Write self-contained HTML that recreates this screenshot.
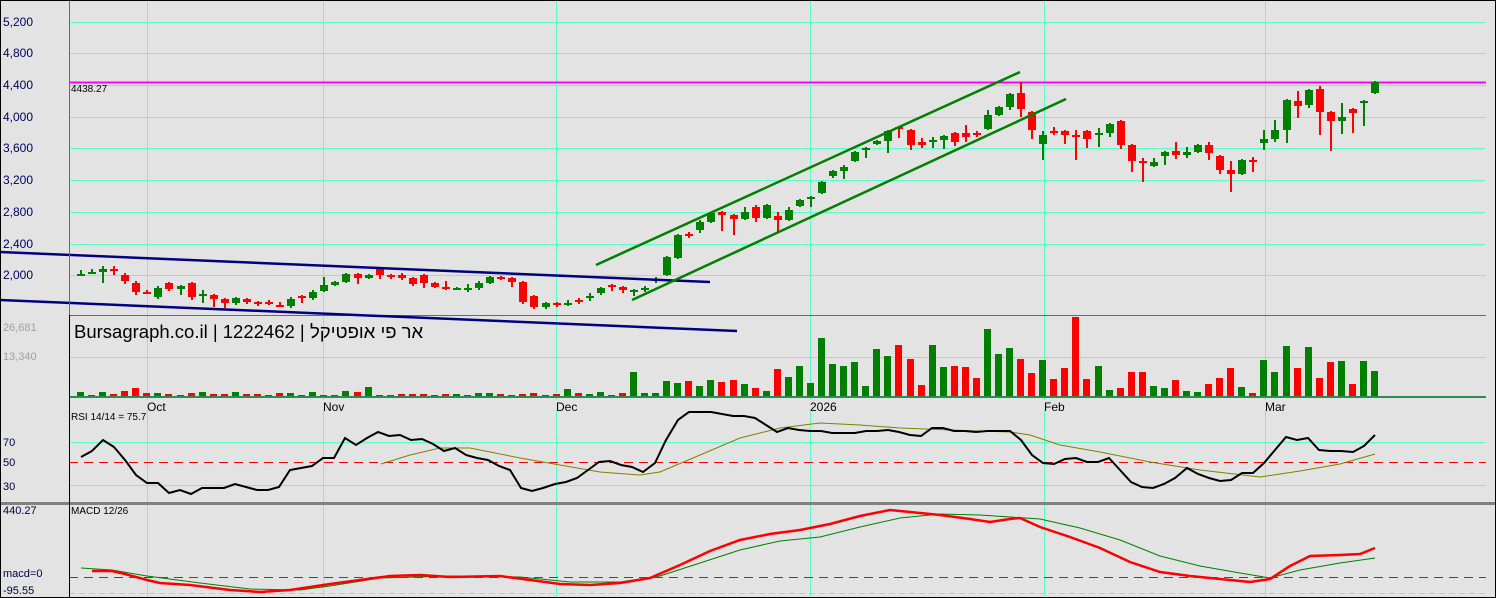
<!DOCTYPE html>
<html><head><meta charset="utf-8"><style>
html,body{margin:0;padding:0;background:#e3e3e3;}
body{width:1496px;height:598px;overflow:hidden;}
svg{display:block;font-family:"Liberation Sans",Arial,sans-serif;}
</style></head><body>
<svg id="s" width="1496" height="598" viewBox="0 0 1496 598" xmlns="http://www.w3.org/2000/svg">
<rect width="1496" height="598" fill="#e3e3e3"/>
<g id="grid" stroke="#5cffc8" stroke-width="1" shape-rendering="crispEdges">
<line x1="69" x2="1486" y1="22.5" y2="22.5"/><line x1="69" x2="1486" y1="53.5" y2="53.5"/><line x1="69" x2="1486" y1="85.5" y2="85.5"/><line x1="69" x2="1486" y1="117.5" y2="117.5"/><line x1="69" x2="1486" y1="148.5" y2="148.5"/><line x1="69" x2="1486" y1="180.5" y2="180.5"/><line x1="69" x2="1486" y1="212.5" y2="212.5"/><line x1="69" x2="1486" y1="244.5" y2="244.5"/><line x1="69" x2="1486" y1="275.5" y2="275.5"/>
<line x1="69" x2="1486" y1="357.5" y2="357.5"/>
<line x1="69" x2="1486" y1="442.5" y2="442.5"/><line x1="69" x2="1486" y1="485.5" y2="485.5"/>
<line x1="69" x2="1486" y1="593.5" y2="593.5" stroke-dasharray="6,4"/>
<line y1="0" y2="598" x1="147.5" x2="147.5"/><line y1="0" y2="598" x1="323.5" x2="323.5"/><line y1="0" y2="598" x1="556.5" x2="556.5"/><line y1="0" y2="598" x1="810.5" x2="810.5"/><line y1="0" y2="598" x1="1044.5" x2="1044.5"/><line y1="0" y2="598" x1="1265.5" x2="1265.5"/>
</g>
<rect x="0" y="400" width="1496" height="10" fill="#e3e3e3"/>
<g font-size="12" fill="#000">
<text x="147" y="411">Oct</text><text x="323" y="411">Nov</text><text x="556" y="411">Dec</text><text x="810" y="411">2026</text><text x="1044" y="411">Feb</text><text x="1265" y="411">Mar</text>
</g>
<g font-size="12" fill="#000060">
<text x="3" y="26">5,200</text><text x="3" y="57">4,800</text><text x="3" y="89">4,400</text><text x="3" y="121">4,000</text><text x="3" y="152">3,600</text><text x="3" y="184">3,200</text><text x="3" y="216">2,800</text><text x="3" y="248">2,400</text><text x="3" y="279">2,000</text>
</g>
<g font-size="11" fill="#a0a0a0"><text x="3" y="331">26,681</text><text x="3" y="360">13,340</text></g>
<g font-size="11" fill="#000040"><text x="3" y="446">70</text><text x="3" y="466">50</text><text x="3" y="490">30</text>
<text x="3" y="514">440.27</text><text x="3" y="577">macd=0</text><text x="3" y="594">-95.55</text></g>
<line x1="69" x2="1486" y1="82.5" y2="82.5" stroke="#ff00ff" stroke-width="2"/>
<text x="71" y="92" font-size="10" fill="#000">4438.27</text>
<line x1="69" x2="1486" y1="315.5" y2="315.5" stroke="#2e8b57" stroke-width="1"/>
<line x1="69" x2="1486" y1="397" y2="397" stroke="#2e8b57" stroke-width="2"/>
<g id="cd"></g><g id="vol"></g>
<polyline points="0,252 710,282" stroke="#000080" stroke-width="2.5" fill="none"/>
<polyline points="0,300 737,331" stroke="#000080" stroke-width="2.5" fill="none"/>
<polyline points="596,265 1020,72" stroke="#008000" stroke-width="2.5" fill="none"/>
<polyline points="632,300 1066,99" stroke="#008000" stroke-width="2.5" fill="none"/>
<text x="74" y="338" font-size="18.5" fill="#000">Bursagraph.co.il | 1222462 |</text>
<text x="310" y="338" font-size="18.5" fill="#000">אר פי אופטיקל</text>
<text x="71" y="420" font-size="10" fill="#000">RSI 14/14 = 75.7</text>
<line x1="69" x2="1486" y1="462.5" y2="462.5" stroke="#ff0000" stroke-dasharray="9,6"/>
<line x1="69" x2="1486" y1="577.5" y2="577.5" stroke="#ff0000" stroke-dasharray="9,6"/>
<polyline fill="none" stroke="#808000" stroke-width="1" points="381,464 410,455 440,448 470,448 520,458 560,465 600,472 640,475 660,472 700,455 740,438 780,428 820,423 860,425 900,428 950,430 1010,432 1030,435 1060,445 1100,452 1150,462 1200,470 1260,477 1300,471 1340,464 1375,454"/>
<polyline fill="none" stroke="#000" stroke-width="2" points="81,457 92,451 103,440 114,447 125,460 136,475 147,483 158,483 169,493 180,490 191,494 202,488 213,488 224,488 235,484 246,487 257,490 268,490 279,487 290,470 301,468 312,466 323,458 334,458 345,438 356,445 367,438 378,432 389,436 400,435 411,440 422,439 433,444 444,451 455,448 466,455 477,458 488,460 499,466 510,470 521,488 532,491 543,488 555,484 566,482 577,478 588,470 599,462 610,461 621,465 632,467 643,472 655,463 666,440 678,420 689,412 700,412 711,412 722,414 733,416 744,416 755,418 766,425 777,432 788,428 799,430 810,431 821,431 832,433 844,433 855,433 866,431 877,431 888,430 899,432 910,435 921,436 932,428 943,428 954,431 965,431 976,432 987,431 998,431 1010,431 1021,440 1032,455 1043,463 1054,464 1065,459 1076,458 1087,462 1098,462 1109,458 1120,470 1131,482 1142,487 1153,488 1164,484 1175,478 1187,468 1198,474 1209,478 1220,481 1231,480 1242,473 1253,473 1264,463 1275,450 1286,437 1297,440 1308,438 1319,450 1330,451 1341,451 1353,452 1364,446 1375,435"/>
<rect x="0" y="502" width="1496" height="3" fill="#808080"/>
<text x="71" y="514" font-size="10" fill="#000">MACD 12/26</text>
<polyline fill="none" stroke="#008000" stroke-width="1" points="81,568 112,570 147,576 200,583 250,589 300,590 330,586 380,578 450,576 520,577 570,582 620,582 660,576 700,563 740,550 780,541 820,537 860,527 900,518 940,514 980,515 1010,517 1040,519 1080,528 1120,540 1160,556 1200,566 1240,573 1270,578 1300,570 1340,563 1375,558"/>
<polyline fill="none" stroke="#ff0000" stroke-width="2.5" points="92,571 112,571 125,574 147,580 160,583 190,585 230,590 260,592 290,590 310,587 330,584 360,580 390,576 420,575 450,577 500,576 530,580 560,584 590,585 620,583 650,578 680,565 710,551 740,540 770,534 800,530 830,524 860,516 890,510 910,512 940,515 970,519 990,522 1010,519 1020,518 1040,527 1070,537 1100,548 1130,562 1160,572 1190,576 1220,579 1250,582 1270,579 1290,566 1310,556 1340,555 1360,554 1375,548"/>
<line x1="69.5" x2="69.5" y1="0" y2="315" stroke="#2e8b57"/>
<line x1="69.5" x2="69.5" y1="315" y2="598" stroke="#000"/>
<rect x="0" y="0" width="1496" height="598" fill="none" stroke="#000" stroke-width="2"/>
</svg>
<script>
var C="274,274,g,270,276;272,272,g,269,274;269,272,g,266,283;269,271,r,266,275;275,281,r,273,284;283,292,r,281,295;292,292,r,290,294;288,297,g,286,299;283,289,r,282,291;286,289,g,285,295;283,297,r,282,300;294,296,g,290,303;295,299,r,294,307;299,303,r,298,308;298,303,g,297,305;299,302,r,298,304;302,302,r,301,306;302,302,r,300,305;305,305,r,302,306;299,306,g,297,308;296,298,r,295,303;292,298,g,290,300;285,291,g,277,292;282,285,g,281,286;274,282,g,273,283;274,278,r,273,284;275,278,g,274,279;269,275,r,268,279;275,275,r,274,279;275,278,r,273,280;278,284,r,277,286;275,283,r,274,288;283,287,r,282,288;287,287,r,281,290;288,288,g,287,290;288,288,g,284,292;283,288,g,281,290;277,283,g,276,284;277,277,r,276,280;278,282,r,277,287;282,302,r,281,304;296,307,r,295,309;303,307,g,302,309;303,303,r,302,307;303,303,g,300,306;300,300,r,298,304;296,296,g,293,301;288,293,g,287,295;285,287,r,284,291;287,290,r,286,293;290,290,g,289,296;288,290,g,286,292;279,279,g,277,283;257,275,g,256,276;235,258,g,234,259;234,234,r,232,238;222,230,g,220,233;213,222,g,212,223;212,215,r,211,231;215,219,r,214,235;212,219,g,207,220;207,218,r,205,222;205,218,g,204,219;216,220,r,212,232;210,220,g,207,221;200,206,g,199,207;197,197,g,196,207;182,193,g,181,194;171,176,g,170,178;167,171,g,165,179;152,161,g,151,162;148,148,g,147,158;141,144,g,140,145;131,141,g,130,153;127,129,r,126,138;130,145,r,129,150;142,145,r,138,148;140,140,g,137,148;136,140,g,135,149;133,142,r,132,146;133,137,r,125,142;133,133,r,131,137;115,129,g,110,130;107,115,g,106,116;94,107,g,93,110;93,109,r,82,117;112,130,r,111,139;135,144,g,131,160;131,131,r,127,135;131,135,r,130,144;135,135,r,130,160;131,139,r,130,148;133,133,g,128,147;124,133,g,123,137;121,145,r,120,149;145,161,r,144,172;161,161,r,158,182;162,166,g,158,167;152,156,g,151,165;151,155,r,142,159;152,155,g,147,158;145,152,g,144,153;145,153,r,142,160;156,170,r,155,174;170,174,r,161,192;160,174,g,159,175;160,160,r,157,172;139,143,g,130,150;130,139,g,120,142;100,130,g,99,143;101,106,r,91,118;90,105,g,89,108;89,112,r,86,135;112,121,r,111,151;117,121,g,103,134;109,113,r,108,133;101,101,g,100,126;82,93,g,81,94".split(";");
var V=[392,395,392,394,391,388,393,393,394,395,393,392,394,394,392,394,394,395,393,393,395,392,395,395,391,392,387,395,395,394,394,394,395,394,394,395,393,393,394,395,394,393,395,
394,389,393,394,392,395,393,372,393,393,381,383,381,386,380,382,380,384,388,391,369,377,366,383,338,364,366,362,386,349,356,345,359,385,345,367,366,367,378,329,354,348,359,373,360,379,368,317,379,366,390,388,372,372,386,388,380,391,392,384,378,368,387,393,360,372,346,368,347,378,362,361,384,361,371];
var cd=document.getElementById("cd"),vg=document.getElementById("vol"),h="",vh="";
for(var i=0;i<C.length;i++){var p=C[i].split(","),x=Math.round(80+i*11.06),t=+p[0],b=+p[1],c=p[2]=="g"?"#008000":"#ff0000",wt=+p[3],wb=+p[4];
h+='<rect x="'+x+'" y="'+wt+'" width="2" height="'+(wb-wt)+'" fill="'+c+'"/>';
var bh=b-t;if(bh<2)bh=2;h+='<rect x="'+(x-3)+'" y="'+t+'" width="8" height="'+bh+'" fill="'+c+'"/>';
var vt=V[i]||395;vh+='<rect x="'+(x-3)+'" y="'+vt+'" width="7" height="'+(396-vt)+'" fill="'+c+'"/>';}
cd.innerHTML=h;vg.innerHTML=vh;
</script>
</body></html>
